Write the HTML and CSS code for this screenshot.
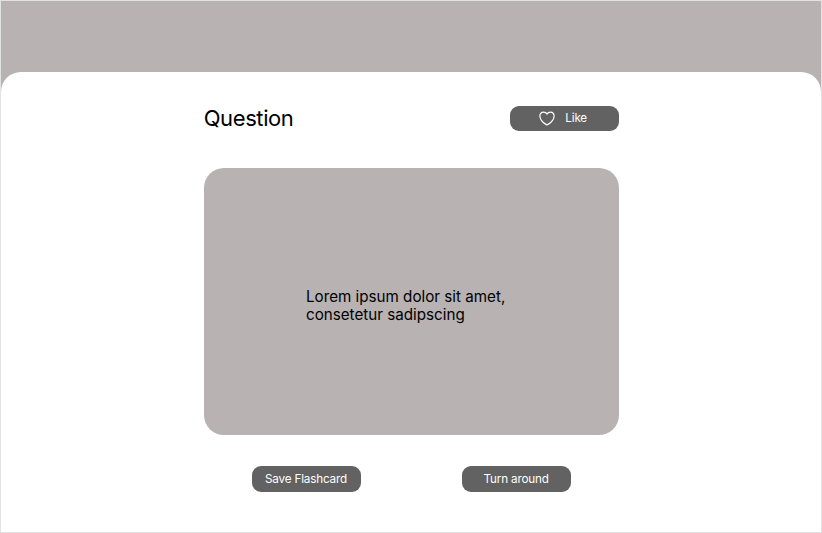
FILE: index.html
```html
<!DOCTYPE html>
<html lang="en">
<head>
<meta charset="utf-8">
<title>Flashcard</title>
<link rel="stylesheet" href="styles.css">
</head>
<body>
<main class="sheet">
  <header class="head">
    <h1 class="title">Question</h1>
    <button class="btn like"><svg class="heart" viewBox="0 0 16 15"><path d="M8 13.9 C5.5 12.9 .9 9.3 .9 5.2 C.9 2.7 2.4 1.1 4.6 1.1 C6.2 1.1 7.4 1.8 8 3 C8.6 1.8 9.8 1.1 11.4 1.1 C13.6 1.1 15.1 2.7 15.1 5.2 C15.1 9.3 10.5 12.9 8 13.9Z"/></svg><span>Like</span></button>
  </header>
  <section class="card"><p class="text">Lorem ipsum dolor sit amet,<br>consetetur sadipscing</p></section>
  <footer class="actions">
    <button class="btn">Save Flashcard</button>
    <button class="btn">Turn around</button>
  </footer>
</main>
</body>
</html>
```
FILE: styles.css
```css
* { box-sizing: border-box; }
body {
  margin: 0;
  height: 533px;
  padding-top: 70.5px;
  border: 1px solid #e2e2e2;
  background: #b8b2b2;
  font-family: Inter, "Liberation Sans", sans-serif;
  overflow: hidden;
}
.sheet {
  height: 460.5px;
  padding: 34px 201.6px 0 202.7px;
  border-radius: 20px 20px 0 0;
  background: #fff;
}
.head { display: flex; justify-content: space-between; height: 62px; }
.title { margin: 0; font-size: 22px; line-height: 25px; font-weight: 400; letter-spacing: -0.4px; }
.btn {
  display: flex;
  align-items: center;
  justify-content: center;
  width: 109.5px;
  height: 25.3px;
  padding: 0 1px 0 0;
  border: 0;
  border-radius: 9px;
  background: #626262;
  color: #fff;
  font: 400 11.7px/15px Inter, "Liberation Sans", sans-serif;
  letter-spacing: -0.18px;
}
.like { gap: 10px; padding-right: 3px; }
.heart { width: 16px; height: 15px; margin-top: 1px; fill: none; stroke: #fff; stroke-width: 1.2; }
.card { height: 267.4px; padding: 120px 0 0 102.3px; border-radius: 20px; background: #b8b2b2; }
.text { margin: 0; font-size: 15.2px; line-height: 18.5px; white-space: nowrap; }
.actions { display: flex; justify-content: space-between; padding: 31.6px 48px 0; }
```
